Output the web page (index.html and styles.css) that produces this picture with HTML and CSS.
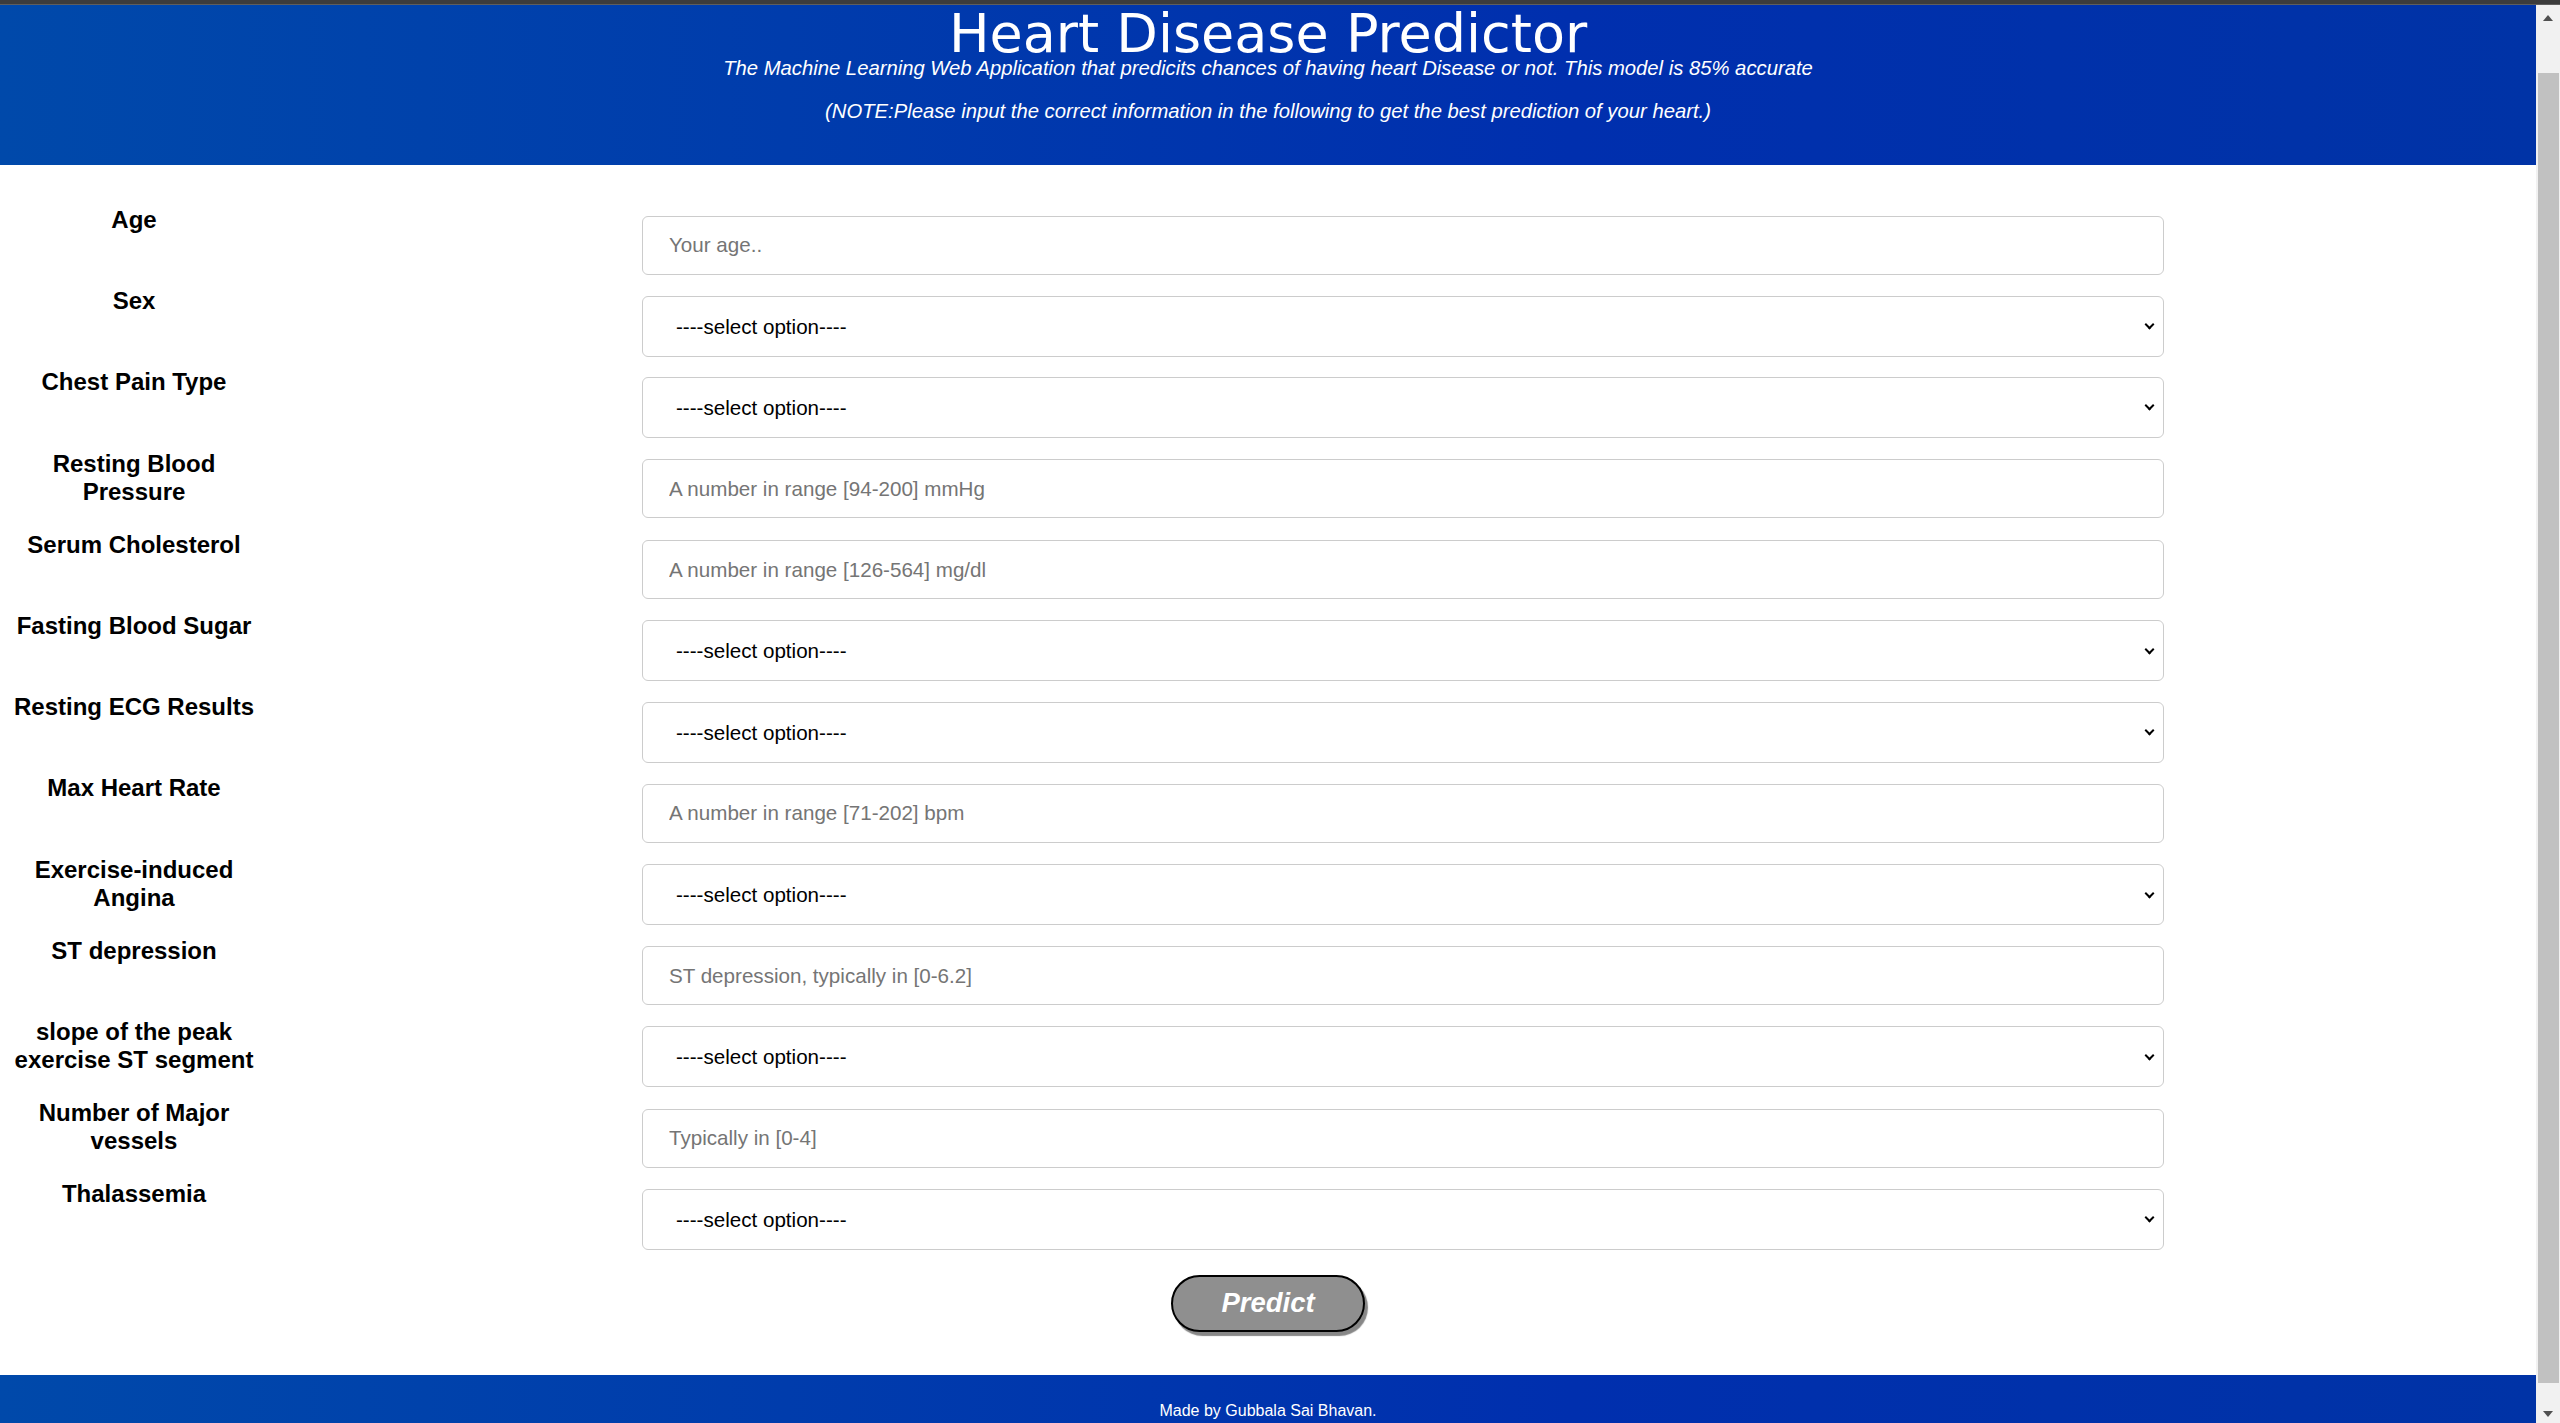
FILE: index.html
```html
<!DOCTYPE html>
<html lang="en">
<head>
<meta charset="utf-8">
<title>Heart Disease Predictor</title>
<link rel="stylesheet" href="styles.css">
</head>
<body>
<div class="topbar"></div>
<div class="frame">
  <div class="page">
    <header class="hero">
      <h1 class="title">Heart Disease Predictor</h1>
      <p class="sub">The Machine Learning Web Application that predicits chances of having heart Disease or not. This model is 85% accurate</p>
      <p class="sub note">(NOTE:Please input the correct information in the following to get the best prediction of your heart.)</p>
    </header>
    <form class="form">
      <div class="row"><label class="lbl">Age</label><input class="ctl inp" type="text" placeholder="Your age.."></div>
      <div class="row"><label class="lbl">Sex</label><span class="selwrap"><select class="ctl sel"><option>----select option----</option></select></span></div>
      <div class="row"><label class="lbl">Chest Pain Type</label><span class="selwrap"><select class="ctl sel"><option>----select option----</option></select></span></div>
      <div class="row"><label class="lbl">Resting Blood Pressure</label><input class="ctl inp" type="text" placeholder="A number in range [94-200] mmHg"></div>
      <div class="row"><label class="lbl">Serum Cholesterol</label><input class="ctl inp" type="text" placeholder="A number in range [126-564] mg/dl"></div>
      <div class="row"><label class="lbl">Fasting Blood Sugar</label><span class="selwrap"><select class="ctl sel"><option>----select option----</option></select></span></div>
      <div class="row"><label class="lbl">Resting ECG Results</label><span class="selwrap"><select class="ctl sel"><option>----select option----</option></select></span></div>
      <div class="row"><label class="lbl">Max Heart Rate</label><input class="ctl inp" type="text" placeholder="A number in range [71-202] bpm"></div>
      <div class="row"><label class="lbl">Exercise-induced Angina</label><span class="selwrap"><select class="ctl sel"><option>----select option----</option></select></span></div>
      <div class="row"><label class="lbl">ST depression</label><input class="ctl inp" type="text" placeholder="ST depression, typically in [0-6.2]"></div>
      <div class="row"><label class="lbl">slope of the peak exercise ST segment</label><span class="selwrap"><select class="ctl sel"><option>----select option----</option></select></span></div>
      <div class="row"><label class="lbl">Number of Major vessels</label><input class="ctl inp" type="text" placeholder="Typically in [0-4]"></div>
      <div class="row"><label class="lbl">Thalassemia</label><span class="selwrap"><select class="ctl sel"><option>----select option----</option></select></span></div>
      <div class="actions"><button class="predict" type="button">Predict</button></div>
    </form>
    <footer class="foot">Made by Gubbala Sai Bhavan.</footer>
  </div>
  <div class="scrollbar">
    <div class="sb-btn sb-up"><span class="arrow-up"></span></div>
    <div class="sb-track"><div class="sb-thumb"></div></div>
    <div class="sb-btn sb-down"><span class="arrow-down"></span></div>
  </div>
</div>
</body>
</html>
```
FILE: styles.css
```css
html, body {
  margin: 0;
  height: 100%;
  overflow: hidden;
}
body {
  display: flex;
  flex-direction: column;
  background: #fff;
  font-family: "Liberation Sans", Arial, sans-serif;
}
.topbar {
  flex: none;
  height: 4px;
  background: #3c3c3c;
  border-bottom: 1px solid #5e5e5e;
}
.frame {
  flex: 1;
  display: flex;
  min-height: 0;
}
.page {
  flex: 1;
  min-width: 0;
}

/* drawn scrollbar */
.scrollbar {
  flex: 0 0 24px;
  display: flex;
  flex-direction: column;
  background: #f1f1f1;
}
.sb-btn {
  flex: 0 0 24px;
  display: flex;
  justify-content: center;
}
.sb-up {
  align-items: flex-start;
  padding-top: 10px;
  box-sizing: border-box;
}
.sb-down {
  align-items: flex-start;
  padding-top: 12px;
  box-sizing: border-box;
}
.arrow-up {
  width: 0;
  height: 0;
  border-left: 5.5px solid transparent;
  border-right: 5.5px solid transparent;
  border-bottom: 6px solid #505050;
}
.arrow-down {
  width: 0;
  height: 0;
  border-left: 5.5px solid transparent;
  border-right: 5.5px solid transparent;
  border-top: 6px solid #505050;
}
.sb-track {
  flex: 1;
  display: flex;
  padding: 44px 1px 16px 2px;
}
.sb-thumb {
  flex: 1;
  background: #c1c1c1;
}

.hero {
  background: linear-gradient(to right, #0049aa 0%, #002fae 62%, #0033a6 100%);
  color: #fff;
  text-align: center;
  padding: 5px 0 42px;
}
.title {
  margin: 0;
  font-family: "DejaVu Sans", Verdana, sans-serif;
  font-weight: normal;
  font-size: 54px;
  line-height: 47px;
}
.sub {
  margin: 0;
  font-style: italic;
  font-size: 20.25px;
  line-height: 23px;
}
.note {
  margin-top: 20px;
}

.form {
  padding-top: 40px;
}
.row {
  display: flex;
  align-items: flex-start;
  height: 81.2px;
}
.lbl {
  flex: 0 0 268px;
  text-align: center;
  font-weight: bold;
  font-size: 24px;
  color: #000;
  padding-top: 1px;
}
.ctl {
  width: 1522px;
  box-sizing: border-box;
  border: 1px solid #cccccc;
  border-radius: 6px;
  background: #fff;
  font-family: "Liberation Sans", Arial, sans-serif;
  font-size: 20.6px;
  color: #000;
  padding: 0 26px;
  margin: 0;
}
.inp {
  height: 59px;
  margin-left: 374px;
  margin-top: 10.5px;
}
.inp::placeholder {
  color: #757575;
}
.selwrap {
  position: relative;
  display: block;
  margin-left: 374px;
  margin-top: 9.5px;
}
.selwrap::after {
  content: "";
  position: absolute;
  right: 11px;
  top: 50%;
  width: 5px;
  height: 5px;
  border-right: 2.5px solid #000;
  border-bottom: 2.5px solid #000;
  transform: translateY(-72%) rotate(45deg);
  pointer-events: none;
}
.sel {
  display: block;
  height: 61px;
  -webkit-appearance: none;
  appearance: none;
  padding-left: 33px;
  padding-right: 30px;
}
.actions {
  padding: 14.4px 0 43px;
  text-align: center;
}
.predict {
  width: 194px;
  height: 57px;
  box-sizing: border-box;
  border: 2px solid #000;
  border-radius: 30px;
  background: #8f8f8f;
  box-shadow: 3px 4px 1px #878787;
  color: #fff;
  font-family: "Liberation Sans", Arial, sans-serif;
  font-weight: bold;
  font-style: italic;
  font-size: 27.5px;
  padding: 0;
}
.foot {
  height: 50px;
  box-sizing: border-box;
  padding-top: 27px;
  background: linear-gradient(to right, #0049aa 0%, #002fae 62%, #0033a6 100%);
  color: #fff;
  text-align: center;
  font-size: 16px;
  line-height: 18px;
}
```
